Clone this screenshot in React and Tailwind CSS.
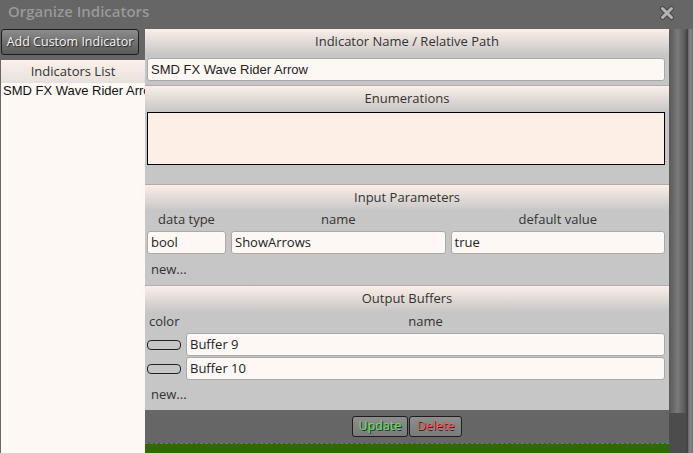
import React from "react";

const ui = { fontFamily: '"Open Sans", "Noto Sans", sans-serif' };
const arial = { fontFamily: '"Liberation Sans", Arial, sans-serif' };

function SectionHeader({ children }) {
  return (
    <div
      className="h-[26px] flex items-center justify-center text-[13px] text-[#333] bg-gradient-to-b from-[#fcefe7] to-[#c6c6c6]"
      style={ui}
    >
      {children}
    </div>
  );
}

function Field({ value, className = "", font = ui }) {
  return (
    <div
      className={`h-[23px] flex items-center px-[3px] bg-[#fdf8f4] border border-[#a9a9a9] rounded-[3px] text-[13px] text-[#222] ${className}`}
      style={font}
    >
      {value}
    </div>
  );
}

function CloseIcon() {
  return (
    <svg width="16" height="16" viewBox="0 0 16 16">
      <path d="M3.5 3.5 L12.5 12.5 M12.5 3.5 L3.5 12.5" stroke="#4a4a4a" strokeWidth="5" strokeLinecap="round" />
      <path d="M3.5 3.5 L12.5 12.5 M12.5 3.5 L3.5 12.5" stroke="#b4b4b4" strokeWidth="3" strokeLinecap="round" />
    </svg>
  );
}

export default function App() {
  return (
    <div className="w-[693px] h-[453px] bg-[#666] flex flex-col overflow-hidden">
      {/* title bar */}
      <div className="h-[29px] flex items-center justify-between pl-[8px] pr-[18px] shrink-0">
        <span className="text-[15px] font-semibold text-[#999] -mt-[6px]" style={ui}>
          Organize Indicators
        </span>
        <div className="-mt-[3px]">
          <CloseIcon />
        </div>
      </div>

      <div className="flex flex-1 min-h-0">
        {/* left column */}
        <div className="w-[145px] flex flex-col shrink-0">
          <button
            className="ml-[1px] w-[138px] h-[26px] rounded-[3px] border border-[#1e1e1e] bg-gradient-to-b from-[#8c8c8c] to-[#5a5a5a] text-[12.5px] text-[#f2f2f2] [text-shadow:1px_1px_1px_#222] flex items-center justify-center"
            style={ui}
          >
            Add Custom Indicator
          </button>
          <div className="ml-[1px] mt-[5px] flex-1 bg-[#fdf8f4] flex flex-col overflow-hidden">
            <div
              className="h-[23px] flex items-center justify-center text-[13px] text-[#333] bg-gradient-to-b from-[#fcf0e9] to-[#e6e0dc]"
              style={ui}
            >
              Indicators List
            </div>
            <div className="pl-[2px] -mt-[2px] text-[13px] text-[#111] whitespace-nowrap overflow-hidden" style={arial}>
              SMD FX Wave Rider Arrow
            </div>
          </div>
        </div>

        {/* main panel */}
        <div className="w-[524px] flex flex-col shrink-0">
          <div className="flex-1 bg-[#c6c6c6] flex flex-col">
            {/* name / path */}
            <div className="h-[57px] border-b border-[#adadad] flex flex-col">
              <SectionHeader>Indicator Name / Relative Path</SectionHeader>
              <div className="pl-[2px] pr-[4px] mt-[3px]">
                <Field value="SMD FX Wave Rider Arrow" font={arial} />
              </div>
            </div>

            {/* enumerations */}
            <div className="h-[99px] border-b border-[#adadad] flex flex-col">
              <SectionHeader>Enumerations</SectionHeader>
              <div className="pl-[2px] pr-[4px]">
                <div className="h-[53px] bg-[#fdeee6] border border-black" />
              </div>
            </div>

            {/* input parameters */}
            <div className="h-[101px] border-b border-[#adadad] flex flex-col" style={ui}>
              <SectionHeader>Input Parameters</SectionHeader>
              <div className="pl-[2px] pr-[4px] grid grid-cols-[79px_1fr_1fr] gap-x-[5px] text-[13px] text-[#333]">
                <div className="h-[18px] flex items-center justify-center">data type</div>
                <div className="h-[18px] flex items-center justify-center">name</div>
                <div className="h-[18px] flex items-center justify-center">default value</div>
                <Field value="bool" className="mt-[2px]" />
                <Field value="ShowArrows" className="mt-[2px]" />
                <Field value="true" className="mt-[2px]" />
              </div>
              <div className="pl-[6px] mt-[6px] text-[13px] text-[#333]">new...</div>
            </div>

            {/* output buffers */}
            <div className="flex-1 flex flex-col" style={ui}>
              <SectionHeader>Output Buffers</SectionHeader>
              <div className="pl-[2px] pr-[4px] flex text-[13px] text-[#333] h-[19px] items-center">
                <span className="w-[39px] pl-[2px]">color</span>
                <span className="flex-1 text-center">name</span>
              </div>
              <div className="pl-[2px] pr-[4px] mt-[2px] flex flex-col gap-[1px]">
                {["Buffer 9", "Buffer 10"].map((b) => (
                  <div key={b} className="flex items-center gap-[5px]">
                    <div className="w-[34px] h-[10px] rounded-[4px] border border-[#222] shrink-0" />
                    <Field value={b} className="flex-1 h-[22px]" />
                  </div>
                ))}
              </div>
              <div className="pl-[6px] mt-[5px] text-[13px] text-[#333]">new...</div>
            </div>
          </div>

          {/* footer actions */}
          <div className="h-[33px] flex items-center justify-center gap-[1px] shrink-0">
            <button
              className="w-[56px] h-[21px] rounded-[3px] border border-[#1e1e1e] bg-gradient-to-b from-[#8e8e8e] to-[#7a7a7a] text-[12.5px] text-[#5be35b] [text-shadow:1px_1px_0_#2a2a2a] flex items-center justify-center"
              style={ui}
            >
              Update
            </button>
            <button
              className="w-[53px] h-[21px] rounded-[3px] border border-[#1e1e1e] bg-gradient-to-b from-[#8e8e8e] to-[#7a7a7a] text-[12.5px] text-[#ff5555] [text-shadow:1px_1px_0_#2a2a2a] flex items-center justify-center"
              style={ui}
            >
              Delete
            </button>
          </div>
          <div className="h-[10px] bg-[#2d6a00] border-t border-dashed border-[#3ea01e] shrink-0" />
        </div>

        {/* scrollbar */}
        <div className="w-[17px] flex flex-col shrink-0">
          <div className="h-[384px] bg-gradient-to-r from-[#585858] via-[#7a7a7a] to-[#545454] rounded-t-[3px]" />
          <div className="flex-1 bg-[#4c4c4c]" />
        </div>
        <div className="w-[2px] bg-[#444] shrink-0" />
        <div className="flex-1 bg-gradient-to-r from-[#6a6a6a] via-[#858585] to-[#6e6e6e]" />
      </div>
    </div>
  );
}
